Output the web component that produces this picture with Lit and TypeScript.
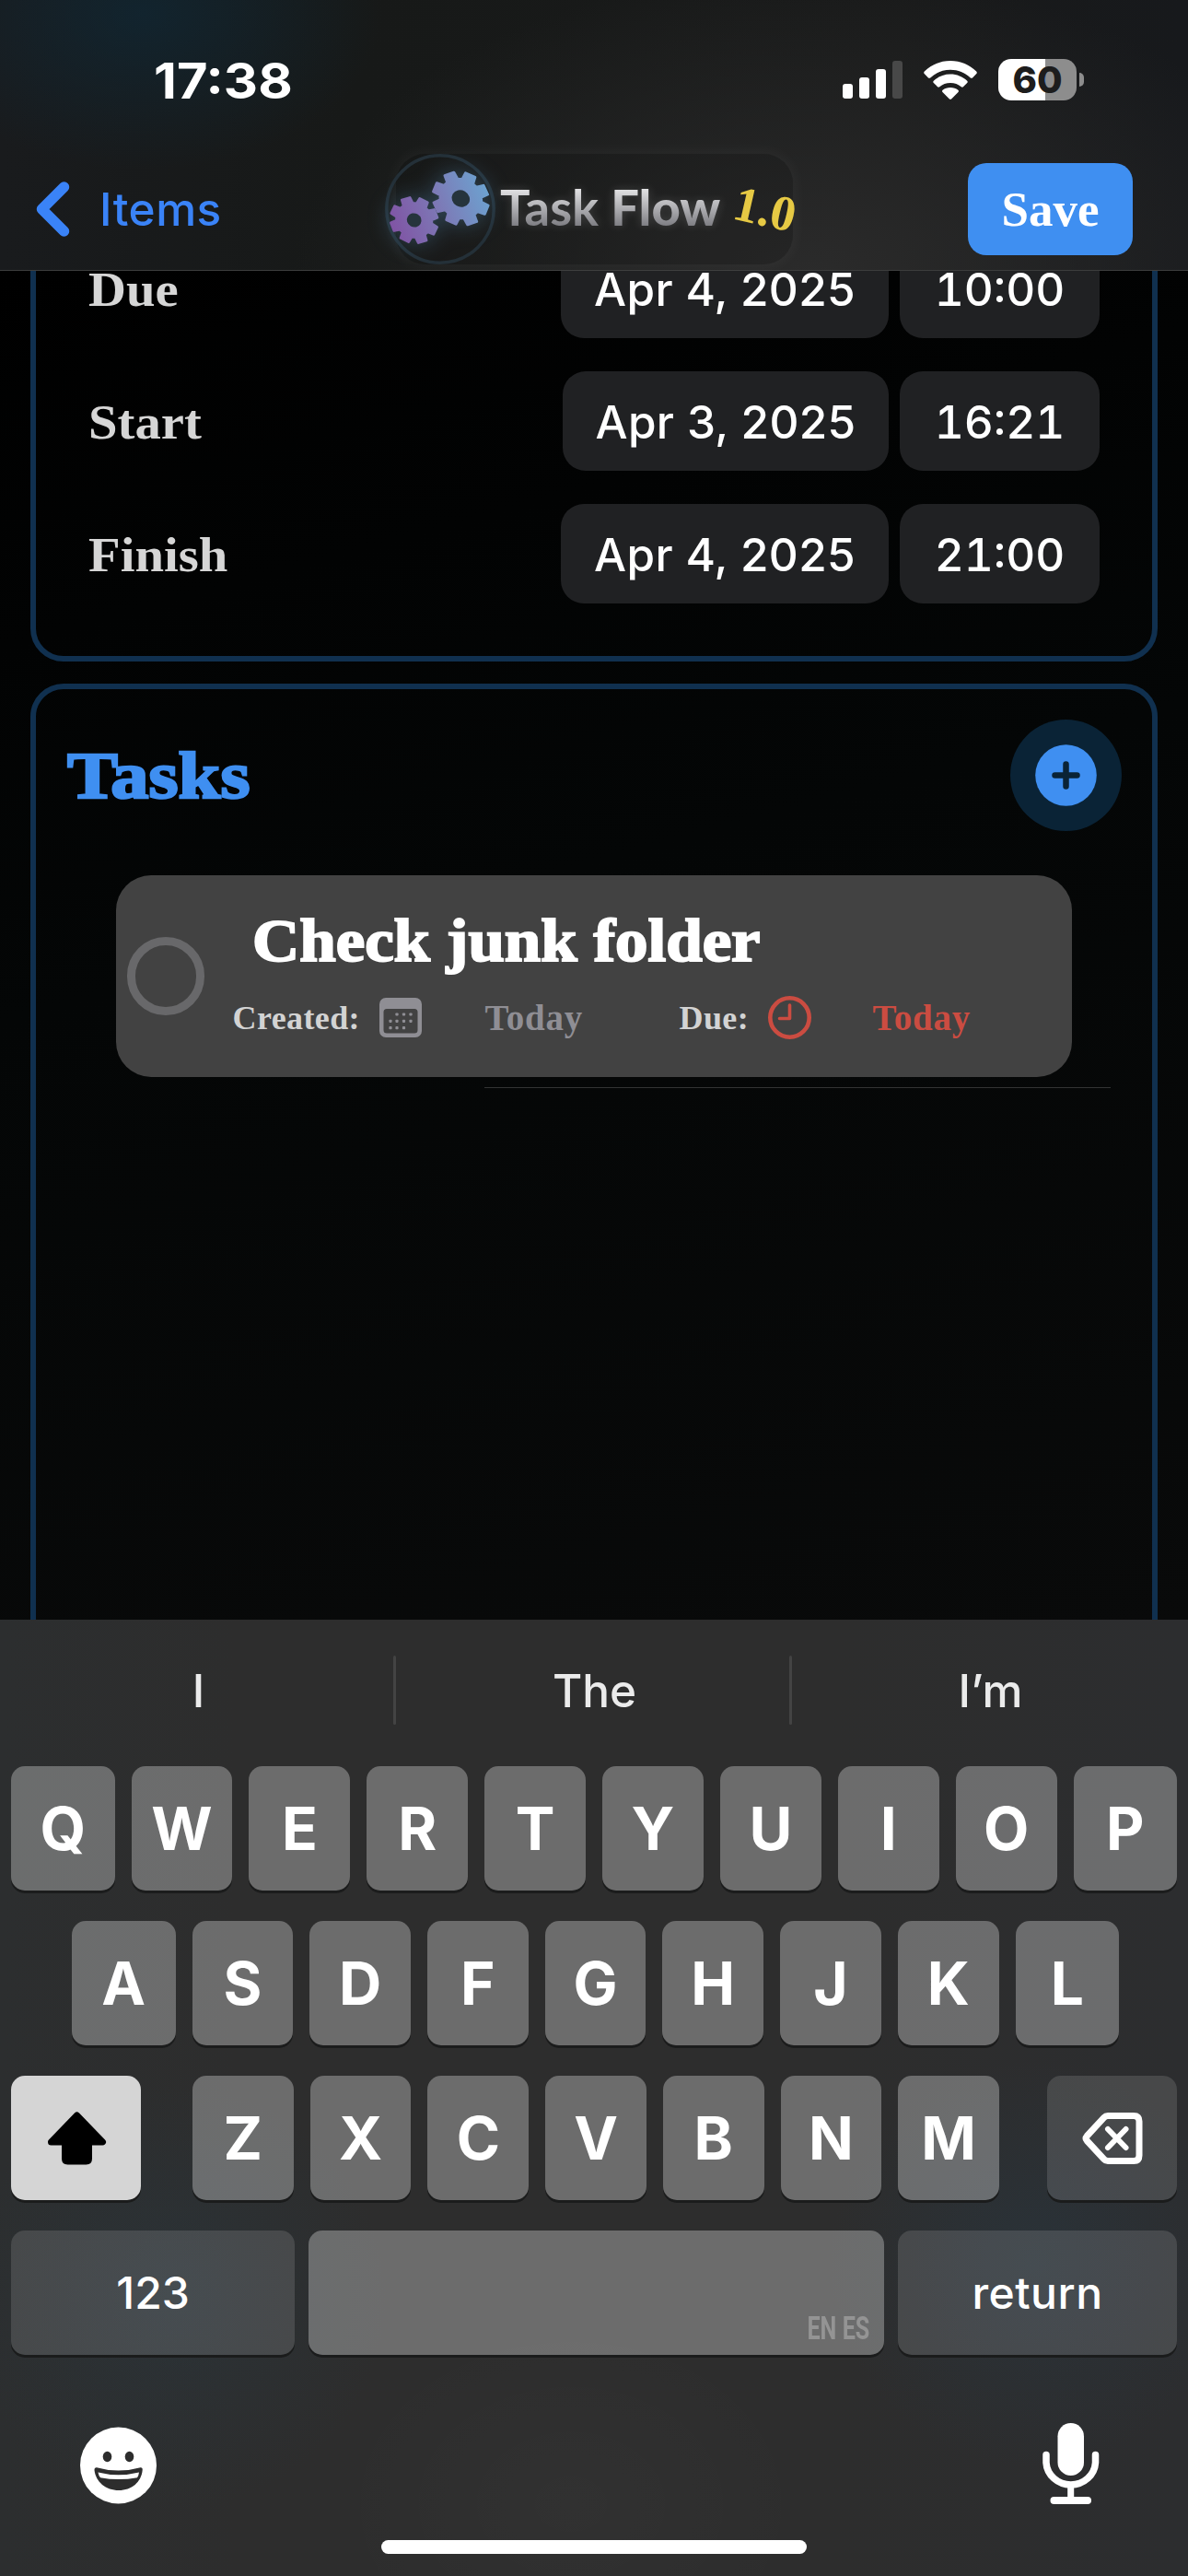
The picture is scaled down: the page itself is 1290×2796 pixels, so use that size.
import { LitElement, html, css, svg } from "lit";
import { customElement } from "lit/decorators.js";
import { classMap } from "lit/directives/class-map.js";

interface DateRow {
  label: string;
  date: string;
  time: string;
  narrow?: boolean;
}

const ROWS: DateRow[] = [
  { label: "Due", date: "Apr 4, 2025", time: "10:00" },
  { label: "Start", date: "Apr 3, 2025", time: "16:21", narrow: true },
  { label: "Finish", date: "Apr 4, 2025", time: "21:00" },
];

/** Outline of an eight-toothed cog centred on the origin. */
function gearPath(outer: number, inner: number, hole: number, start: number): string {
  const at = (r: number, deg: number) => {
    const a = (deg * Math.PI) / 180;
    return `${(r * Math.cos(a)).toFixed(2)} ${(r * Math.sin(a)).toFixed(2)}`;
  };
  const points: string[] = [];
  for (let i = 0; i < 8; i++) {
    const c = start + i * 45;
    points.push(at(inner, c - 16), at(outer, c - 10.5), at(outer, c + 10.5), at(inner, c + 16));
  }
  return `M${points.join("L")}Z M${hole} 0A${hole} ${hole} 0 1 0 ${-hole} 0A${hole} ${hole} 0 1 0 ${hole} 0Z`;
}

@customElement("status-bar")
class StatusBar extends LitElement {
  static styles = css`
    :host {
      display: flex;
      align-items: center;
      height: 160px;
      box-sizing: border-box;
      padding: 14px 113px 0 167px;
      font-family: Inter, "Liberation Sans", sans-serif;
      color: #fff;
    }
    .time {
      flex: 1;
      font-size: 53px;
      font-weight: 700;
      line-height: 64px;
      margin-top: 2px;
      transform: scaleX(1.09);
      transform-origin: left;
    }
    svg {
      display: block;
      flex: none;
    }
    .signal {
      margin-right: 22px;
    }
    .wifi {
      margin-right: 23px;
    }
    .battery {
      display: flex;
      align-items: center;
      gap: 3px;
      margin-top: -1px;
    }
    .cell {
      width: 85px;
      height: 45px;
      border-radius: 14px;
      background: linear-gradient(90deg, #fff 60%, #8d8d8d 60%);
      color: #1d1d1d;
      font-size: 40px;
      font-weight: 800;
      line-height: 45px;
      text-align: center;
    }
    .tip {
      width: 5px;
      height: 15px;
      border-radius: 0 5px 5px 0;
      background: #8d8d8d;
    }
  `;
  render() {
    return html`
      <div class="time">17:38</div>
      <svg class="signal" width="66" height="42" viewBox="0 0 66 42">
        <rect x="0" y="25" width="11" height="16" rx="3" fill="#fff" />
        <rect x="18" y="18" width="11" height="23" rx="3" fill="#fff" />
        <rect x="36" y="9" width="11" height="32" rx="3" fill="#fff" />
        <rect x="54" y="0" width="11" height="41" rx="3" fill="#484848" />
      </svg>
      <svg class="wifi" width="58" height="42" viewBox="0 0 58 42" fill="#fff">
        <path d="M29 0C40 0 50 4.4 57.2 11.6C58 12.4 58 13.4 57.3 14.1L53 18.4C52.4 19 51.5 19 50.8 18.4C44.8 12.8 37.3 9.7 29 9.7S13.200 12.800 7.200 18.400C6.500 19 5.600 19 5 18.400L.7 14.100C0 13.400 0 12.400 .8 11.600C8 4.400 18 0 29 0Z" />
        <path d="M29 14.600C36 14.600 42.300 17.300 47.200 21.700C47.900 22.400 47.900 23.400 47.200 24L42.900 28.200C42.300 28.800 41.500 28.800 40.800 28.200C37.600 25.600 33.500 24 29 24S20.400 25.600 17.200 28.200C16.500 28.800 15.700 28.800 15.100 28.200L10.800 24C10.100 23.400 10.100 22.400 10.800 21.700C15.700 17.300 22 14.600 29 14.600Z" />
        <path d="M29 29C32.200 29 35.100 30 37.400 31.800C38.100 32.400 38.100 33.300 37.500 34L30.300 41.200C29.500 42 28.500 42 27.700 41.200L20.500 34C19.900 33.300 19.900 32.400 20.600 31.800C22.900 30 25.800 29 29 29Z" />
      </svg>
      <div class="battery">
        <div class="cell">60</div>
        <div class="tip"></div>
      </div>
    `;
  }
}

@customElement("nav-bar")
class NavBar extends LitElement {
  static styles = css`
    :host {
      display: flex;
      align-items: center;
      height: 134px;
      box-sizing: border-box;
      padding: 0 60px 0 39px;
    }
    svg {
      display: block;
      flex: none;
    }
    .back {
      display: flex;
      align-items: center;
      gap: 29px;
      width: 391px;
      color: #3a83f7;
      font: 500 49.5px Inter, "Liberation Sans", sans-serif;
      letter-spacing: 0.5px;
    }
    .logo {
      display: flex;
      align-items: center;
      width: 431px;
      height: 120px;
      border-radius: 32px;
      background: rgba(0, 0, 0, 0.1);
      box-shadow: 0 0 14px 5px rgba(255, 255, 255, 0.03);
    }
    .gears {
      margin-left: -12px;
      overflow: visible;
    }
    .gearset {
      filter: drop-shadow(0 0 12px rgba(95, 160, 210, 0.35));
    }
    .word {
      flex: none;
      width: 243px;
      margin-left: 5px;
      font: 700 53px Lato, "Open Sans", sans-serif;
      line-height: 70px;
      margin-top: -4px;
      white-space: pre;
      color: transparent;
      background: linear-gradient(180deg, #e8e8ea 18%, #7c7c81 80%);
      -webkit-background-clip: text;
      background-clip: text;
      filter: drop-shadow(0 0 5px rgba(255, 255, 255, 0.16));
      transform: scaleX(1.025);
      transform-origin: left;
    }
    .word b {
      font-weight: 900;
    }
    .version {
      flex: none;
      margin-left: 11px;
      font: 700 54px "Liberation Serif", serif;
      color: #e6c944;
      transform: rotate(13deg);
    }
    .save {
      margin-left: auto;
      width: 179px;
      height: 100px;
      border-radius: 20px;
      background: #3f8ff1;
      color: #fff;
      font: 700 53px/101px "Liberation Serif", serif;
      text-align: center;
    }
  `;
  render() {
    return html`
      <div class="back">
        <svg width="40" height="60" viewBox="0 0 40 60">
          <path d="M30.500 6L6.500 30L30.500 54" fill="none" stroke="currentColor" stroke-width="11.500" stroke-linecap="round" stroke-linejoin="round" />
        </svg>
        <span>Items</span>
      </div>
      <div class="logo">
        <svg class="gears" width="120" height="120" viewBox="0 0 120 120">
          <defs>
            <linearGradient id="tint" gradientUnits="userSpaceOnUse" x1="4" y1="80" x2="114" y2="40">
              <stop offset="0" stop-color="#8052a3" />
              <stop offset=".5" stop-color="#7d79b6" />
              <stop offset="1" stop-color="#6ca3d0" />
            </linearGradient>
            <mask id="cogs">
              <g fill="#fff" fill-rule="evenodd" stroke="#fff" stroke-width="3" stroke-linejoin="round">
                <path transform="translate(82.300 48.500) rotate(30) scale(1 .9)" d=${gearPath(31, 23, 11.5, -142)} />
                <path transform="translate(31.700 72) rotate(30) scale(1 .93)" d=${gearPath(26, 19.5, 9.5, -139)} />
              </g>
            </mask>
          </defs>
          <circle cx="60" cy="60" r="58.200" fill="none" stroke="#243038" stroke-width="3.500" />
          <g class="gearset">
            <circle cx="82.300" cy="48.500" r="12" fill="#26343c" />
            <circle cx="31.700" cy="72" r="10" fill="#26343c" />
            <rect width="120" height="120" fill="url(#tint)" mask="url(#cogs)" />
          </g>
        </svg>
        <div class="word">Task <b>Flow</b></div>
        <div class="version">1.0</div>
      </div>
      <div class="save">Save</div>
    `;
  }
}

@customElement("task-card")
class TaskCard extends LitElement {
  static styles = css`
    :host {
      display: flex;
      align-items: center;
      box-sizing: border-box;
      width: 1038px;
      height: 219px;
      padding-left: 11.500px;
      border-radius: 38px;
      background: #424242;
      font-family: "Liberation Serif", serif;
    }
    .check {
      flex: none;
      box-sizing: border-box;
      width: 84.500px;
      height: 84.500px;
      border: 9.500px solid #68686a;
      border-radius: 50%;
    }
    .body {
      display: flex;
      flex-direction: column;
      margin-left: 30.500px;
      margin-top: 6px;
    }
    .title {
      align-self: flex-start;
      margin-left: 21px;
      height: 84px;
      line-height: 84px;
      font-size: 65px;
      font-weight: 700;
      white-space: nowrap;
      color: #fff;
      -webkit-text-stroke: 2px #fff;
      transform: scaleX(1.091);
      transform-origin: left;
    }
    .meta {
      display: flex;
      align-items: center;
      height: 83px;
      font-size: 36px;
      font-weight: 700;
      white-space: nowrap;
    }
    .caption {
      color: #d3d3d3;
    }
    .created {
      width: 159px;
      letter-spacing: 0.400px;
    }
    .due {
      width: 96px;
      letter-spacing: 0.400px;
    }
    .when {
      font-size: 39px;
      letter-spacing: 0.800px;
    }
    .grey {
      width: 211px;
      margin-left: 69px;
      color: #8f8e94;
    }
    .red {
      margin-left: 67px;
      color: #cb4c41;
    }
    svg {
      display: block;
      flex: none;
    }
  `;
  render() {
    const dots = [
      [19, 18], [26.5, 18], [34, 18],
      [12, 25.3], [19, 25.3], [26.5, 25.3], [34, 25.3],
      [12, 32.7], [19, 32.7], [26.5, 32.7],
    ];
    return html`
      <div class="check"></div>
      <div class="body">
        <div class="title">Check junk folder</div>
        <div class="meta">
          <span class="caption created">Created:</span>
          <svg width="46" height="43" viewBox="0 0 46 43">
            <path fill="#8f8e94" fill-rule="evenodd" d="M7 0H39A7 7 0 0 1 46 7V36A7 7 0 0 1 39 43H7A7 7 0 0 1 0 36V7A7 7 0 0 1 7 0ZM8 12Q4.500 12 4.500 15.500V35Q4.500 38.500 8 38.500H38Q41.500 38.500 41.500 35V15.500Q41.500 12 38 12Z" />
            ${dots.map(([x, y]) => svg`<rect x=${x - 1.6} y=${y - 1.6} width="3.200" height="3.200" rx=".8" fill="#8f8e94" />`)}
          </svg>
          <span class="when grey">Today</span>
          <span class="caption due">Due:</span>
          <svg width="47" height="47" viewBox="0 0 47 47" fill="none" stroke="#cb4c41">
            <circle cx="23.500" cy="23.500" r="21.200" stroke-width="4.600" />
            <path d="M23.500 10V24.500H12.500" stroke-width="3.600" stroke-linecap="round" stroke-linejoin="round" />
          </svg>
          <span class="when red">Today</span>
        </div>
      </div>
    `;
  }
}

@customElement("key-board")
class KeyBoard extends LitElement {
  static styles = css`
    :host {
      display: flex;
      flex-direction: column;
      box-sizing: border-box;
      width: 1290px;
      height: 1038px;
      color: #fff;
      font-family: Inter, "Liberation Sans", sans-serif;
      background: radial-gradient(circle 230px at 190px 735px, rgba(38, 62, 76, 0.3), transparent),
        radial-gradient(circle 220px at 1120px 700px, rgba(36, 62, 80, 0.3), transparent),
        radial-gradient(ellipse 260px 200px at 620px 960px, rgba(255, 255, 255, 0.02), transparent),
        linear-gradient(90deg, #2c2e2f, #2d2d2d 20%, #2d2d2d 70%, #2c2d2f);
    }
    .suggestions {
      display: flex;
      align-items: center;
      height: 153px;
      margin-bottom: 6px;
    }
    .word {
      flex: none;
      box-sizing: border-box;
      width: 427px;
      padding-left: 4px;
      text-align: center;
      font-size: 49.500px;
      font-weight: 500;
      color: #ebebeb;
    }
    .bar {
      width: 3px;
      height: 75px;
      border-radius: 2px;
      background: #434343;
    }
    .row {
      display: flex;
      gap: 18px;
      height: 135px;
      margin: 0 12px 33px;
    }
    .second {
      margin-left: 78px;
      margin-right: 75px;
    }
    .last {
      gap: 15px;
      margin-bottom: 0;
    }
    .key {
      flex: 1 1 0;
      display: flex;
      align-items: center;
      justify-content: center;
      border-radius: 15px;
      background: rgba(255, 255, 255, 0.3);
      box-shadow: 0 3px 0 #1b1c1c;
      font-size: 64px;
      font-weight: 680;
    }
    .edge {
      flex: 0 0 112.500px;
    }
    .side {
      flex: 0 0 141px;
    }
    .dark {
      background: rgba(255, 255, 255, 0.13);
      font-size: 48px;
      font-weight: 500;
    }
    .shift {
      margin-right: 38px;
      background: #d5d5d5;
    }
    .delete {
      margin-left: 34px;
    }
    .numbers {
      flex: 0 0 308px;
    }
    .return {
      flex: 0 0 303px;
      letter-spacing: 0.500px;
    }
    .space {
      align-items: flex-end;
      justify-content: flex-end;
      box-sizing: border-box;
      padding: 0 16px 8px 0;
      font: 700 35px/40px Roboto, sans-serif;
      color: #949494;
    }
    .lang {
      transform: scaleX(0.72);
      transform-origin: right;
    }
    .tools {
      display: flex;
      align-items: center;
      justify-content: space-between;
      padding: 71.500px 96px 0 87px;
    }
    .home {
      width: 462px;
      height: 15px;
      border-radius: 8px;
      margin: 39.500px auto 0 414px;
      background: #fff;
    }
    svg {
      display: block;
      flex: none;
    }
  `;
  private letters(text: string, edges: boolean) {
    return [...text].map(
      (c, i) => html`<div class=${classMap({ key: true, edge: edges && (i === 0 || i === text.length - 1) })}>${c}</div>`,
    );
  }
  render() {
    return html`
      <div class="suggestions">
        <span class="word">I</span><i class="bar"></i><span class="word">The</span><i class="bar"></i><span class="word">I’m</span>
      </div>
      <div class="row">${this.letters("QWERTYUIOP", true)}</div>
      <div class="row second">${this.letters("ASDFGHJKL", true)}</div>
      <div class="row">
        <div class="key side shift">
          <svg width="66" height="58" viewBox="0 0 66 58">
            <path d="M33.500 4L61.500 33H46.500V51Q46.500 54 43.500 54H23.500Q20.500 54 20.500 51V33H5.500Z" stroke="#000" stroke-width="7" stroke-linejoin="round" />
          </svg>
        </div>
        ${this.letters("ZXCVBNM", false)}
        <div class="key side dark delete">
          <svg width="66" height="58" viewBox="0 0 66 58" fill="none" stroke="#fff" stroke-linecap="round" stroke-linejoin="round">
            <path d="M28 4.500H56Q62 4.500 62 10.500V47.500Q62 53.500 56 53.500H28Q25.500 53.500 23.800 51.600L5.200 31.500Q3 29 5.200 26.500L23.800 6.400Q25.500 4.500 28 4.500Z" stroke-width="7" />
            <path d="M28 19L47.500 39M47.500 19L28 39" stroke-width="6" />
          </svg>
        </div>
      </div>
      <div class="row last">
        <div class="key dark numbers">123</div>
        <div class="key space"><span class="lang">EN ES</span></div>
        <div class="key dark return">return</div>
      </div>
      <div class="tools">
        <svg width="84" height="90" viewBox="0 0 84 90">
          <circle cx="41.500" cy="48" r="41.500" fill="#fff" />
          <ellipse cx="29.500" cy="38.500" rx="4.800" ry="5.700" fill="#2d2d2d" />
          <ellipse cx="53.500" cy="38.500" rx="4.800" ry="5.700" fill="#2d2d2d" />
          <path d="M18 50.200Q41.500 57 65.500 50.200Q68 50 67.700 53C66.500 66 56 75 42 75S17 66 15.500 53Q15.500 50 18 50.200Z" fill="#2d2d2d" />
          <path d="M19.500 55.500Q41.500 61 64 55.500Q63.500 59.500 62 61.200Q41.500 65 22 61.200Q20 59 19.500 55.500Z" fill="#fff" />
        </svg>
        <svg width="62" height="90" viewBox="0 0 62 90" fill="none" stroke="#fff" stroke-linecap="round">
          <rect x="16.500" y="2" width="28.500" height="57" rx="14.250" fill="#fff" stroke="none" />
          <path d="M4 36.500V45A26.800 25.500 0 0 0 57.500 45V36.500" stroke-width="7.500" />
          <path d="M30.700 72V84" stroke-width="7" />
          <path d="M12.500 86H49" stroke-width="8" />
        </svg>
      </div>
      <div class="home"></div>
    `;
  }
}

@customElement("app-root")
class AppRoot extends LitElement {
  static styles = css`
    :host {
      display: block;
      width: 1290px;
      height: 2796px;
      overflow: hidden;
      background: #000;
    }
    .screen {
      display: flex;
      flex-direction: column;
      height: 2796px;
    }
    .header {
      flex: none;
      height: 294px;
      background: radial-gradient(ellipse 260px 170px at 155px 15px, rgba(14, 42, 58, 0.62), transparent),
        radial-gradient(ellipse 560px 330px at 880px 300px, #2b2b2b, rgba(40, 40, 40, 0)),
        linear-gradient(90deg, #191b1d, #171918 30%, #191a1a 75%, #17191c);
      box-shadow: inset 0 -1px 0 #3c3d3d;
    }
    .content {
      flex: none;
      display: flex;
      flex-direction: column;
      height: 1464px;
      overflow: hidden;
      background: linear-gradient(165deg, #000 0%, #040606 45%, #090a0a 100%);
    }
    .section {
      flex: none;
      box-sizing: border-box;
      margin: 0 33px 24px;
      border: 6px solid #10304f;
      border-radius: 36px;
    }
    .dates {
      display: flex;
      flex-direction: column;
      gap: 36px;
      margin-top: -101px;
      padding: 60px 57px 57px 57px;
    }
    .date-row {
      display: flex;
      align-items: center;
      gap: 12px;
      height: 108px;
    }
    .label {
      margin: 2px auto 0 0;
      font: 700 53px/60px "Liberation Serif", serif;
      color: #d6d6d6;
      transform: scaleX(1.07);
      transform-origin: left;
    }
    .pill {
      height: 108px;
      border-radius: 25px;
      background: #202123;
      color: #fff;
      text-align: center;
      font: 500 49.500px/110px Inter, "Liberation Sans", sans-serif;
    }
    .date {
      width: 356px;
      letter-spacing: 0.350px;
    }
    .narrow {
      width: 354px;
    }
    .time {
      width: 217px;
      font-variant-numeric: tabular-nums;
    }
    .tasks {
      height: 1300px;
      padding: 33px 33.500px 0 34px;
    }
    .heading {
      display: flex;
      align-items: center;
      justify-content: space-between;
      height: 121px;
      margin-bottom: 48px;
    }
    h2 {
      margin: 2px 0 0;
      font: 700 71px "Liberation Serif", serif;
      color: #3f8ff1;
      -webkit-text-stroke: 2.500px #3f8ff1;
      transform: scaleX(1.16);
      transform-origin: left;
    }
    .add {
      display: block;
    }
    .card {
      margin-left: 53px;
    }
    .divider {
      height: 1px;
      margin: 11px 11.500px 0 453px;
      background: #333434;
    }
  `;
  render() {
    return html`
      <div class="screen">
        <div class="header">
          <status-bar></status-bar>
          <nav-bar></nav-bar>
        </div>
        <div class="content">
          <div class="section dates">
            ${ROWS.map(
              (r) => html`<div class="date-row">
                <span class="label">${r.label}</span>
                <span class=${classMap({ pill: true, date: true, narrow: !!r.narrow })}>${r.date}</span>
                <span class="pill time">${r.time}</span>
              </div>`,
            )}
          </div>
          <div class="section tasks">
            <div class="heading">
              <h2>Tasks</h2>
              <svg class="add" width="121" height="121" viewBox="0 0 121 121">
                <circle cx="60.500" cy="60.500" r="60.500" fill="#0a2336" />
                <circle cx="60.500" cy="60.500" r="33.300" fill="#3f8ff1" />
                <path d="M60.500 48.500V72.500M48.500 60.500H72.500" stroke="#0a2336" stroke-width="6.500" stroke-linecap="round" />
              </svg>
            </div>
            <task-card class="card"></task-card>
            <div class="divider"></div>
          </div>
        </div>
        <key-board></key-board>
      </div>
    `;
  }
}
